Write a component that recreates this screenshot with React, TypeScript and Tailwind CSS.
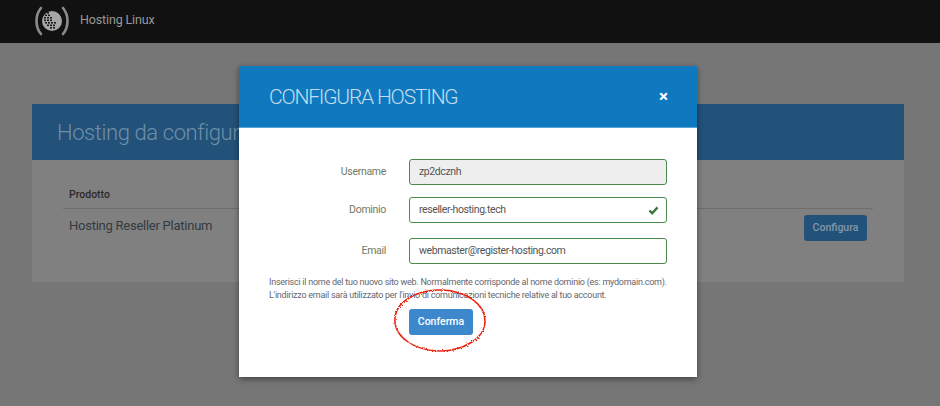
import React from 'react'

const FONT = "font-['Roboto','Noto_Sans',sans-serif]"

function Logo() {
  return (
    <svg width="36" height="30" viewBox="0 0 36 30" className="shrink-0 -translate-y-px">
      <path d="M7 2 C1 9 1 21 7 28" fill="none" stroke="#8c8c8c" strokeWidth="2.6" strokeLinecap="round" />
      <path d="M29 2 C35 9 35 21 29 28" fill="none" stroke="#8c8c8c" strokeWidth="2.6" strokeLinecap="round" />
      <circle cx="18" cy="15" r="10" fill="#a6a6a6" />
      <g fill="#1c1c1c">
        <rect x="13" y="6" width="2" height="1.6" />
        <rect x="11" y="8.5" width="2" height="1.6" />
        <rect x="14" y="8.5" width="2" height="1.6" />
        <rect x="10" y="11" width="2" height="1.6" />
        <rect x="13" y="11" width="2" height="1.6" />
        <rect x="16" y="11" width="2" height="1.6" />
        <rect x="10" y="13.5" width="2" height="1.6" />
        <rect x="13" y="13.5" width="2" height="1.6" />
        <rect x="16" y="13.5" width="2" height="1.6" />
        <rect x="11" y="16" width="2" height="1.6" />
        <rect x="14" y="16" width="2" height="1.6" />
        <rect x="17" y="16" width="2" height="1.6" />
        <rect x="20" y="16" width="2" height="1.6" />
        <rect x="13" y="18.5" width="2" height="1.6" />
        <rect x="16" y="18.5" width="2" height="1.6" />
        <rect x="19" y="18.5" width="2" height="1.6" />
        <rect x="16" y="21" width="2" height="1.6" />
        <rect x="19" y="21" width="2" height="1.6" />
      </g>
    </svg>
  )
}

function Field({ label, value, disabled, valid }: { label: string; value: string; disabled?: boolean; valid?: boolean }) {
  return (
    <div className="flex items-center">
      <label className="w-[147px] text-right text-[10.5px] tracking-[-0.3px] text-[#6f7a66]">{label}</label>
      <div
        className={`ml-[23px] flex h-[26px] w-[258px] items-center justify-between rounded-[3px] border border-[#4d8a50] pl-[9px] pr-[7px] text-[10.5px] tracking-[-0.4px] text-[#555] ${disabled ? 'bg-[#eeeeee]' : 'bg-white'}`}
      >
        <span>{value}</span>
        {valid && (
          <svg width="11" height="9" viewBox="0 0 12 10">
            <path d="M1.5 5 L4.5 8 L10.5 1.5" fill="none" stroke="#3c763d" strokeWidth="2.6" />
          </svg>
        )}
      </div>
    </div>
  )
}

export default function App() {
  return (
    <div className={`relative h-[406px] w-[940px] overflow-hidden bg-[#767676] ${FONT}`}>
      <header className="flex h-[43px] items-center gap-[10px] bg-[#111111] pl-[34px]">
        <Logo />
        <span className="-translate-y-px text-[12.5px] tracking-[-0.15px] text-[#999999]">Hosting Linux</span>
      </header>

      <section className="ml-[32px] mr-[36px] mt-[61px] h-[178px] bg-[#808080]">
        <div className="flex h-[56px] items-center bg-[#22527a] px-[25px] text-[22px] font-light tracking-[-0.4px] text-[#6f8fa8]">
          Hosting da configurare
        </div>
        <div className="pl-[31px] pr-[31px] pt-[27px]">
          <div className="border-b border-[#6e6e6e] pb-[5px] pl-[6px] text-[10.5px] font-medium text-[#2a2a2a]">Prodotto</div>
          <div className="flex items-start justify-between pl-[6px] pr-[6px] pt-[6px]">
            <span className="pt-[1px] text-[13px] tracking-[-0.25px] text-[#333a40]">Hosting Reseller Platinum</span>
            <button className="h-[26px] w-[63px] rounded-[3px] bg-[#22527a] text-[10.5px] font-medium text-[#8398aa]">Configura</button>
          </div>
        </div>
      </section>

      <div className="absolute left-[239px] top-[66px] h-[311px] w-[458px] bg-white shadow-[0_2px_6px_rgba(0,0,0,0.45)]">
        <div className="flex h-[62px] items-center justify-between border-b border-[#5aa3d6] bg-[#0f79bf] pl-[30px] pr-[29px]">
          <h2 className="translate-y-px text-[21px] font-light tracking-[-1.2px] text-[#c3dcee]">CONFIGURA HOSTING</h2>
          <span className="text-[17px] font-bold leading-none text-white">×</span>
        </div>
        <form className="flex flex-col pt-[31px]">
          <Field label="Username" value="zp2dcznh" disabled />
          <div className="mt-[12px]">
            <Field label="Dominio" value="reseller-hosting.tech" valid />
          </div>
          <div className="mt-[15px]">
            <Field label="Email" value="webmaster@register-hosting.com" />
          </div>
        </form>
        <p className="mt-[12px] whitespace-nowrap pl-[30px] text-[9px] leading-[13px] tracking-[-0.25px] text-[#66666e]">
          Inserisci il nome del tuo nuovo sito web. Normalmente corrisponde al nome dominio (es: mydomain.com).
          <br />
          L'indirizzo email sarà utilizzato per l'invio di comunicazioni tecniche relative al tuo account.
        </p>
        <div className="mt-[6px] pl-[170px]">
          <button className="h-[26px] w-[64px] rounded-[3px] bg-[#3d88cc] text-[10.5px] font-medium text-white">Conferma</button>
        </div>
      </div>

      {/* hand drawn red circle */}
      <svg className="absolute left-[390px] top-[285px]" width="100" height="70" viewBox="0 0 100 70">
        <filter id="rough">
          <feTurbulence type="fractalNoise" baseFrequency="0.8" numOctaves="2" seed="3" />
          <feDisplacementMap in="SourceGraphic" scale="3" />
        </filter>
        <path
          d="M5 32 C7 15 30 4 52 5 C75 6 95 18 95 36 C95 54 72 66 50 66 C25 66 3 52 5 32 Z"
          fill="none"
          stroke="#e8200c"
          strokeWidth="1.5"
          filter="url(#rough)"
        />
      </svg>
    </div>
  )
}
